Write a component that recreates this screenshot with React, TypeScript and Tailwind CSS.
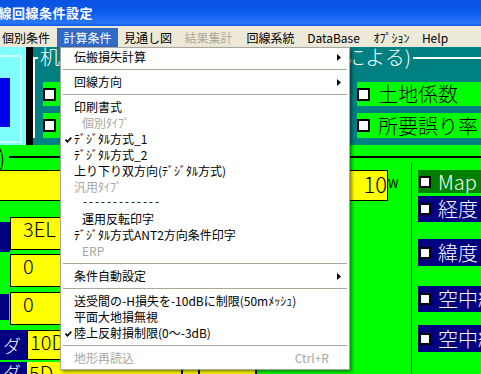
import React from "react";

const jp = "font-['Noto_Sans_CJK_JP','Noto_Sans_CJK_SC',sans-serif]";

type MenuHead = { label: string; w: string; active?: boolean; disabled?: boolean; left?: boolean };

const heads: MenuHead[] = [
  { label: "個別条件", w: "w-[57px]", left: true },
  { label: "計算条件", w: "w-[61px]", active: true },
  { label: "見通し図", w: "w-[60px]" },
  { label: "結果集計", w: "w-[61px]", disabled: true },
  { label: "回線系統", w: "w-[63px]" },
  { label: "DataBase", w: "w-[63px]" },
  { label: "ｵﾌﾟｼｮﾝ", w: "w-[53px]" },
  { label: "Help", w: "w-[34px]" },
];

type Item = {
  label?: string;
  sep?: boolean;
  indent?: boolean;
  disabled?: boolean;
  checked?: boolean;
  sub?: boolean;
  shortcut?: string;
  mono?: boolean;
};

const items: Item[] = [
  { label: "伝搬損失計算", sub: true },
  { sep: true },
  { label: "回線方向", sub: true },
  { sep: true },
  { label: "印刷書式" },
  { label: "個別ﾀｲﾌﾟ", indent: true, disabled: true },
  { label: "ﾃﾞｼﾞﾀﾙ方式_1", checked: true },
  { label: "ﾃﾞｼﾞﾀﾙ方式_2" },
  { label: "上り下り双方向(ﾃﾞｼﾞﾀﾙ方式)" },
  { label: "汎用ﾀｲﾌﾟ", disabled: true },
  { label: "-------------", indent: true, mono: true },
  { label: "運用反転印字", indent: true },
  { label: "ﾃﾞｼﾞﾀﾙ方式ANT2方向条件印字" },
  { label: "ERP", indent: true, disabled: true },
  { sep: true },
  { label: "条件自動設定", sub: true },
  { sep: true },
  { label: "送受間の-H損失を-10dBに制限(50mﾒｯｼｭ)" },
  { label: "平面大地損無視" },
  { label: "陸上反射損制限(0～-3dB)", checked: true },
  { sep: true },
  { label: "地形再読込", disabled: true, shortcut: "Ctrl+R" },
];

const Box = () => <span className="block size-[13px] shrink-0 border-2 border-black bg-white" />;

const CheckRow = ({ label, h }: { label: string; h: string }) => (
  <div className={`flex ${h} items-center gap-[8px] bg-[#00ff00]`}>
    <Box />
    <span className="whitespace-nowrap text-[20px] leading-[20px] font-light text-black">{label}</span>
  </div>
);

const SideBar = ({ label, h, mt, bg }: { label: string; h: string; mt: string; bg: string }) => (
  <div className={`flex ${h} ${mt} ${bg} items-center gap-[7px] pl-[1px]`}>
    <span className="block size-[12px] shrink-0 border-2 border-black bg-white" />
    <span className="whitespace-nowrap text-[20px] leading-[20px] font-light text-white">{label}</span>
  </div>
);

const YBox = ({ text, cls }: { text: string; cls: string }) => (
  <div className={`${cls} border border-black bg-[#ffff00] pl-[12px] text-[20px] leading-[22px] font-light text-black`}>
    {text}
  </div>
);

function DropMenu() {
  return (
    <div className="absolute left-[60px] top-[47px] w-[290px] border border-[#a7a6a0] bg-white pb-[3px] pt-[1px] shadow-[2px_2px_3px_rgba(0,0,0,0.45)]">
      {items.map((it, i) =>
        it.sep ? (
          <div key={i} className="flex h-[9px] items-center px-[2px]">
            <div className="h-px w-full bg-[#aca899]" />
          </div>
        ) : (
          <div
            key={i}
            className={`relative flex h-[16px] items-center pr-[6px] text-[12px] leading-[16px] ${it.indent ? "pl-[21px]" : "pl-[13px]"} ${it.disabled ? "text-[#a7a6a0]" : "text-black"}`}
          >
            {it.checked && (
              <svg width="7" height="6" viewBox="0 0 7 6" className="absolute left-[4px] top-[6px]">
                <path d="M0.6 2.6 L2.4 4.8 L6.3 0.6" fill="none" stroke="#000" strokeWidth="1.6" />
              </svg>
            )}
            <span className={`whitespace-nowrap ${it.mono ? "font-['Liberation_Mono',monospace] text-[10px]" : ""}`}>
              {it.label}
            </span>
            {it.shortcut && <span className="ml-auto mr-[14px] whitespace-nowrap">{it.shortcut}</span>}
            {it.sub && (
              <svg width="4" height="7" viewBox="0 0 4 7" className="ml-auto mr-[2px]">
                <path d="M0 0 L4 3.5 L0 7 Z" fill="#000" />
              </svg>
            )}
          </div>
        )
      )}
    </div>
  );
}

export default function App() {
  return (
    <div className={`relative h-[374px] w-[481px] overflow-hidden bg-[#00ff00] ${jp}`}>
      {/* title bar */}
      <div className="flex h-[26px] items-center bg-[linear-gradient(to_bottom,#0a52e2_0%,#0b58ea_45%,#1e6cf6_75%,#2a78fb_88%,#0d56e2_100%)]">
        <span className="ml-[-15px] whitespace-nowrap text-[13px] font-bold tracking-[0.5px] text-white">
          無線回線条件設定
        </span>
      </div>

      {/* menu bar */}
      <div className="flex h-[21px] bg-[#ece9d8] pt-[2px]">
        {heads.map((m) => (
          <div
            key={m.label}
            className={`flex h-[19px] ${m.w} items-center whitespace-nowrap text-[12px] ${m.left ? "justify-start pl-[2px]" : "justify-center"} ${m.active ? "bg-[#316ac5] text-white" : m.disabled ? "text-[#aca899]" : "text-black"}`}
          >
            {m.label}
          </div>
        ))}
      </div>

      {/* form body */}
      <div className="flex h-[327px] flex-col">
        {/* upper panel */}
        <div className="flex h-[98px] shrink-0">
          <div className="flex w-[26px] flex-col bg-[#80ffff] pt-[8px]">
            <div className="ml-[-3px] flex h-[88px] w-[25px] flex-col border-2 border-[#c4ffff] pt-[21px]">
              <div className="h-[49px] w-[11px] bg-[#0000f0]" />
            </div>
          </div>
          <div className="w-[7px] bg-black" />
          <div className="flex flex-1 flex-col bg-[#008080] pt-[10px]">
            <div className="relative flex h-[81px] border-l-2 border-t-2 border-white pt-[23px]">
              <div className="absolute left-[3px] top-[-12px] flex w-[375px] justify-between bg-[#008080] px-[2px] text-[20px] leading-[20px] font-light text-white">
                <span className="whitespace-nowrap">机上計算</span>
                <span className="whitespace-nowrap">(地形による)</span>
              </div>
              <div className="ml-[8px] flex w-[280px] flex-col gap-[7px]">
                <CheckRow label="見通し判定" h="h-[25px]" />
                <CheckRow label="回折損失" h="h-[26px]" />
              </div>
              <div className="ml-[34px] flex flex-1 flex-col gap-[7px] overflow-hidden">
                <CheckRow label="土地係数" h="h-[25px]" />
                <CheckRow label="所要誤り率" h="h-[26px]" />
              </div>
            </div>
          </div>
        </div>

        {/* divider row */}
        <div className="flex h-[23px] shrink-0 items-center">
          <span className="ml-[-2px] text-[24px] leading-[24px] font-light text-black">)</span>
          <div className="ml-[3px] h-[2px] flex-1 bg-black" />
        </div>

        {/* lower area */}
        <div className="flex flex-1">
          <div className="flex w-[411px] flex-col">
            <div className="mt-[2px] flex h-[31px] items-start">
              <div className="flex h-[31px] w-[388px] items-start justify-end border-y border-r border-black bg-[#ffff00] pt-[1px] text-[22px] leading-[22px] font-light text-black">
                10
              </div>
              <span className="mt-[7px] text-[12px] leading-[12px] text-black">W</span>
            </div>

            <div className="mt-[16px] flex">
              <div className="mt-[5px] h-[30px] w-[10px] bg-[#000080]" />
              <YBox text="3EL /" cls="h-[33px] w-[220px]" />
            </div>
            <div className="mt-[2px] flex pl-[10px]">
              <YBox text="0" cls="h-[33px] w-[220px]" />
            </div>
            <div className="mt-[5px] flex">
              <div className="mt-[2px] h-[26px] w-[9px] bg-[#000080]" />
              <div className="w-px" />
              <YBox text="0" cls="h-[33px] w-[220px]" />
            </div>
            <div className="mt-[5px] flex h-[30px]">
              <div className="flex w-[27px] items-center bg-[#000080] pl-[3px] text-[18px] font-light text-white">ダ</div>
              <div className="w-[220px] border border-black bg-[#ffff00] pl-[2px] text-[20px] leading-[22px] font-light text-black">
                10D
              </div>
            </div>
            <div className="mt-[2px] flex h-[16px] overflow-hidden">
              <div className="w-[27px] bg-[#000080] pl-[3px] text-[18px] leading-[20px] font-light text-white">ダ</div>
              <div className="w-[156px] border-r-2 border-black bg-[#ffff00] pl-[2px] text-[20px] leading-[22px] font-light text-black">
                5D-
              </div>
              <div className="w-[17px] border-r-2 border-black bg-[#ffff00]" />
              <div className="w-[57px] border-r-2 border-black bg-[#ffff00]" />
            </div>
          </div>

          <div className="mt-[-5px] w-px bg-black" />

          <div className="flex flex-1 flex-col overflow-hidden pl-[6px]">
            <SideBar label="Map" h="h-[23px]" mt="mt-[2px]" bg="bg-[#008000]" />
            <SideBar label="経度" h="h-[26px]" mt="mt-[3px]" bg="bg-[#000080]" />
            <SideBar label="緯度" h="h-[27px]" mt="mt-[17px]" bg="bg-[#000080]" />
            <SideBar label="空中線高" h="h-[26px]" mt="mt-[20px]" bg="bg-[#000080]" />
            <SideBar label="空中線利得" h="h-[27px]" mt="mt-[13px]" bg="bg-[#000080]" />
          </div>
        </div>
      </div>

      <DropMenu />
    </div>
  );
}
